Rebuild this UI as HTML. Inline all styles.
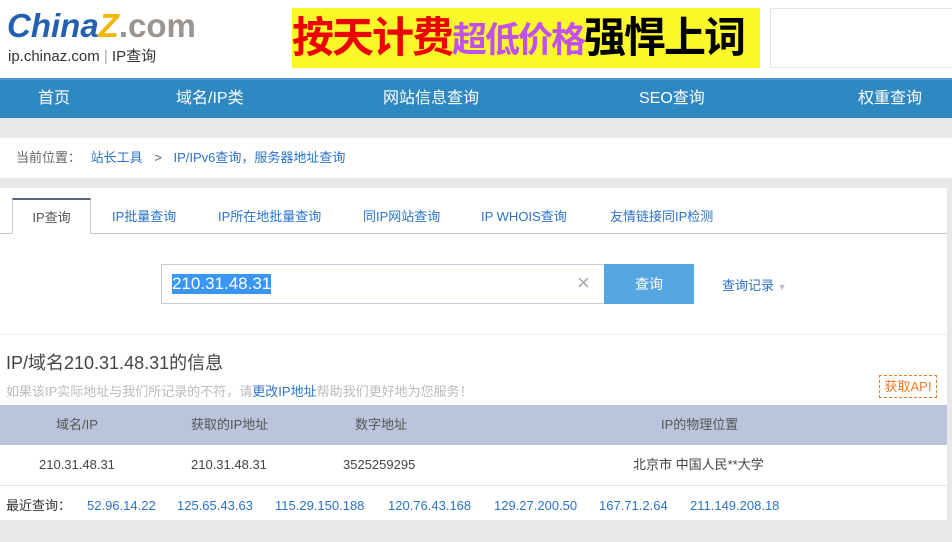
<!DOCTYPE html>
<html><head><meta charset="utf-8"><style>
*{margin:0;padding:0;box-sizing:border-box}
body{width:952px;height:542px;overflow:hidden;background:#e8e8e8;font-family:"Liberation Sans","Noto Sans CJK SC",sans-serif;position:relative;font-size:14px}
.a{position:absolute;white-space:nowrap}
</style></head><body>
<div class="a" style="left:0;top:0;width:952px;height:78px;background:#fff"></div>
<div class="a" style="left:7px;top:7px;font:bold italic 33px 'Liberation Sans',sans-serif;color:#2361b0;letter-spacing:0px">China<span style="color:#f5b400">Z</span><span style="color:#9a9590;font-style:normal">.com</span></div>
<div class="a" style="left:8px;top:45px;font-size:15px;color:#333">ip.chinaz.com <span style="color:#aaa">|</span> IP查询</div>
<div class="a" style="left:292px;top:8px;width:468px;height:60px;background:#fbf82a;font-weight:bold;font-size:42px;line-height:60px;padding-left:0px;letter-spacing:-2px;overflow:hidden"><span style="color:#e00">按天计费</span><span style="color:#c050f0;font-size:35px">超低价格</span><span style="color:#000">强悍上词</span></div>
<div class="a" style="left:770px;top:8px;width:190px;height:60px;border:1px solid #e4e4e4;background:#fff"></div>
<div class="a" style="left:0;top:78px;width:952px;height:40px;background:#2e88c2;border-top:2px solid #4d9bd0;color:#fff;font-size:16px;line-height:38px">
<span class="a" style="left:38px">首页</span><span class="a" style="left:176px">域名/IP类</span><span class="a" style="left:383px">网站信息查询</span><span class="a" style="left:639px">SEO查询</span><span class="a" style="left:858px">权重查询</span></div>
<div class="a" style="left:0;top:138px;width:952px;height:40px;background:#fff;line-height:40px;font-size:13px;color:#666;padding-left:16px">当前位置： <span style="color:#2a73c8;margin-left:6px">站长工具</span> <span style="margin:0 8px">&gt;</span> <span style="color:#2a73c8">IP/IPv6查询，服务器地址查询</span></div>
<div class="a" style="left:0;top:188px;width:947px;height:332px;background:#fff"></div>
<div class="a" style="left:0;top:233px;width:947px;height:1px;background:#c4cbd8"></div>
<div class="a" style="left:12px;top:198px;width:79px;height:36px;border:1px solid #c4cbd8;border-top:2px solid #546682;border-bottom:none;background:#fff;text-align:center;line-height:36px;font-size:13px;color:#555">IP查询</div>
<div class="a" style="top:198px;line-height:38px;font-size:13px;color:#2a73c8;left:0;width:947px">
<span class="a" style="left:112px">IP批量查询</span><span class="a" style="left:218px">IP所在地批量查询</span><span class="a" style="left:363px">同IP网站查询</span><span class="a" style="left:481px">IP WHOIS查询</span><span class="a" style="left:610px">友情链接同IP检测</span></div>
<div class="a" style="left:161px;top:264px;width:444px;height:40px;border:1px solid #c4cbd8;background:#fff"></div>
<div class="a" style="left:172px;top:274px;height:20px;line-height:20px;font-size:17px;color:#fff;background:#3996f5">210.31.48.31</div>
<div class="a" style="left:577px;top:270px;font-size:22px;color:#aaa;font-weight:100">×</div>
<div class="a" style="left:604px;top:264px;width:90px;height:40px;background:#56a6e1;color:#fff;text-align:center;line-height:40px;font-size:14px">查询</div>
<div class="a" style="left:722px;top:275px;font-size:13px;color:#2a73c8">查询记录 <span style="color:#bbb;font-size:9px">▼</span></div>
<div class="a" style="left:0;top:334px;width:947px;height:1px;background:#eee"></div>
<div class="a" style="left:6px;top:349px;font-size:18px;color:#444">IP/域名210.31.48.31的信息</div>
<div class="a" style="left:6px;top:381px;font-size:13px;color:#bbb">如果该IP实际地址与我们所记录的不符，请<span style="color:#2a73c8">更改IP地址</span>帮助我们更好地为您服务！</div>
<div class="a" style="left:879px;top:375px;width:58px;height:23px;border:1px dashed #f07c24;color:#f07c24;font-size:13px;line-height:21px;text-align:center">获取API</div>
<div class="a" style="left:0;top:405px;width:947px;height:40px;background:#bac5dc;color:#555;font-size:13px;line-height:40px">
<span class="a" style="left:56px">域名/IP</span><span class="a" style="left:191px">获取的IP地址</span><span class="a" style="left:355px">数字地址</span><span class="a" style="left:661px">IP的物理位置</span></div>
<div class="a" style="left:0;top:445px;width:947px;height:40px;color:#444;font-size:13px;line-height:40px">
<span class="a" style="left:39px">210.31.48.31</span><span class="a" style="left:191px">210.31.48.31</span><span class="a" style="left:343px">3525259295</span><span class="a" style="left:633px">北京市 中国人民**大学</span></div>
<div class="a" style="left:0;top:485px;width:947px;height:1px;background:#e4e4e4"></div>
<div class="a" style="left:0;top:486px;width:947px;line-height:40px;font-size:13px;color:#2a73c8">
<span class="a" style="left:6px;color:#333">最近查询：</span><span class="a" style="left:87px">52.96.14.22</span><span class="a" style="left:177px">125.65.43.63</span><span class="a" style="left:275px">115.29.150.188</span><span class="a" style="left:388px">120.76.43.168</span><span class="a" style="left:494px">129.27.200.50</span><span class="a" style="left:599px">167.71.2.64</span><span class="a" style="left:690px">211.149.208.18</span></div>
</body></html>
